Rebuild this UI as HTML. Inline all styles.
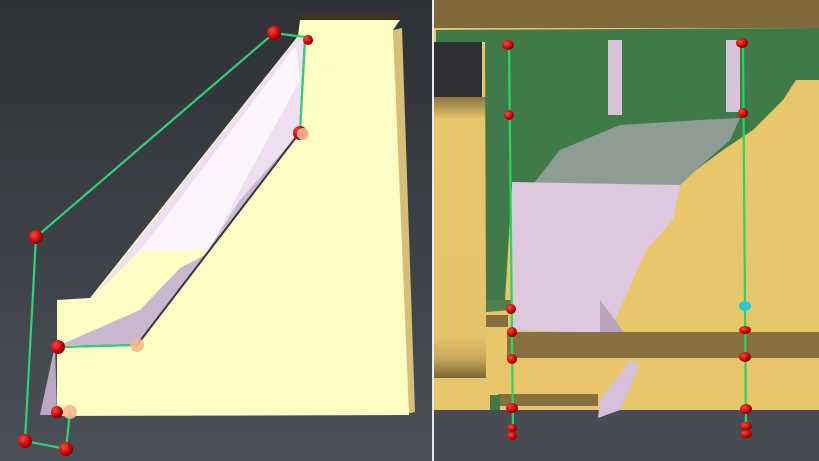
<!DOCTYPE html>
<html><head><style>html,body{margin:0;padding:0;background:#383c41;overflow:hidden}svg{display:block}</style></head>
<body>
<svg width="819" height="461" viewBox="0 0 819 461" xmlns="http://www.w3.org/2000/svg">
<defs>
<linearGradient id="bg" x1="0" y1="0" x2="0" y2="1"><stop offset="0" stop-color="#2e3135"/><stop offset="1" stop-color="#4b5057"/></linearGradient>
<linearGradient id="cyl" x1="0" y1="0" x2="0" y2="1"><stop offset="0" stop-color="#8a7440"/><stop offset="0.08" stop-color="#e8c66a"/><stop offset="0.85" stop-color="#e6c46a"/><stop offset="0.93" stop-color="#c9a85a"/><stop offset="1" stop-color="#7a6535"/></linearGradient>
<radialGradient id="rd" cx="0.35" cy="0.35" r="0.7"><stop offset="0" stop-color="#ff4a3a"/><stop offset="0.6" stop-color="#cc0a0a"/><stop offset="1" stop-color="#7a0000"/></radialGradient>
</defs>
<rect x="0" y="0" width="432" height="461" fill="url(#bg)"/>
<polygon points="393,30 402,28 415,412 406,414" fill="#d8bf78"/>
<polygon points="299,14 400,14 400,20 299,22" fill="#3e3420"/>
<polygon points="57,300 90,298 298,36 300,20 400,20 393,30 409,415 57,416" fill="#fefdc4"/>
<polygon points="92,298 296,40 307,37 300,132 210,250 140,250" fill="#eee0f0"/>
<polygon points="160,225 296,45 300,80 240,190 210,250 140,250" fill="#fbf6fb"/>
<polygon points="60,345 140,310 180,268 205,255 240,200 300,132 137,345" fill="#cbb6cf"/>
<polygon points="40,415 55,345 57,415" fill="#bca8c2"/>
<path d="M300,132 L137,345 M305,37 L300,132" stroke="#3b3340" stroke-width="2" fill="none"/>
<path d="M58,347 L137,345" stroke="#2c2a2a" stroke-width="2"/>
<g stroke="#2ed07a" stroke-width="2.2" fill="none">
<polyline points="305,37 274,33 36,237 25,441 66,449 70,412"/>
<line x1="300" y1="132" x2="305" y2="40"/>
<line x1="58" y1="347" x2="137" y2="345"/>
</g>
<g fill="url(#rd)">
<circle cx="274" cy="33" r="7"/><circle cx="308" cy="40" r="5"/><circle cx="36" cy="237" r="7"/>
<circle cx="58" cy="347" r="7"/><circle cx="300" cy="133" r="7"/><circle cx="57" cy="412" r="6"/>
<circle cx="25" cy="441" r="7"/><circle cx="66" cy="449" r="7"/>
</g>
<g fill="#f2b88e" opacity="0.9"><circle cx="137" cy="345" r="7"/><circle cx="70" cy="412" r="7"/><circle cx="303" cy="134" r="6"/></g>
<rect x="432" y="0" width="2" height="461" fill="#e8eaec"/>
<rect x="434" y="0" width="385" height="461" fill="#e8c66a"/>
<rect x="434" y="0" width="385" height="28" fill="#7e6a3a"/>
<rect x="434" y="410" width="385" height="51" fill="#474c54"/>
<rect x="434" y="42" width="48" height="55" fill="#2e3034"/>
<rect x="434" y="97" width="52" height="281" fill="url(#cyl)"/>
<polygon points="436,30 819,28 819,80 796,80 783,100 753,130 723,150 696,170 680,185 512,186 505,300 486,300 485,42 436,42" fill="#3f7a48"/>
<polygon points="486,300 512,300 512,310 486,312" fill="#4f7e4f"/>
<polygon points="560,150 620,125 700,120 740,118 730,140 696,170 680,185 530,188" fill="#cdb9d2" opacity="0.55"/>
<polygon points="512,182 680,185 673,220 646,250 633,280 615,320 640,356 620,356 600,333 512,330" fill="#ddc8df"/>
<polygon points="600,300 615,320 640,356 620,356 600,333" fill="#b8a3bf"/>
<rect x="608" y="40" width="14" height="75" fill="#d8c2dc"/>
<rect x="726" y="40" width="14" height="72" fill="#d8c2dc"/>
<rect x="507" y="332" width="312" height="26" fill="#85703e"/>
<rect x="486" y="315" width="22" height="12" fill="#85703e"/>
<rect x="498" y="394" width="100" height="12" fill="#85703e"/>
<polygon points="600,400 630,360 640,365 620,410 598,418" fill="#d4c0d8"/>
<polygon points="490,395 500,395 500,410 490,410" fill="#3f7a48"/>
<g stroke="#22d860" stroke-width="2.2"><line x1="509" y1="45" x2="513" y2="432"/><line x1="743" y1="44" x2="746" y2="432"/></g>
<g fill="url(#rd)">
<ellipse cx="508" cy="45" rx="6" ry="5"/><ellipse cx="742" cy="43" rx="6" ry="5"/>
<ellipse cx="509" cy="115" rx="5" ry="5"/><ellipse cx="743" cy="113" rx="5" ry="5"/>
<ellipse cx="511" cy="309" rx="5" ry="5"/><ellipse cx="512" cy="332" rx="5" ry="5"/><ellipse cx="512" cy="359" rx="5" ry="5"/>
<ellipse cx="512" cy="408" rx="6" ry="5"/><ellipse cx="512" cy="428" rx="5" ry="4"/><ellipse cx="512" cy="436" rx="5" ry="4"/>
<ellipse cx="745" cy="330" rx="6" ry="4"/><ellipse cx="745" cy="357" rx="6" ry="5"/><ellipse cx="746" cy="409" rx="6" ry="5"/>
<ellipse cx="746" cy="426" rx="6" ry="4"/><ellipse cx="746" cy="434" rx="6" ry="4"/>
</g>
<ellipse cx="745" cy="306" rx="6" ry="5" fill="#2bc6d8"/>
</svg>
</body></html>
